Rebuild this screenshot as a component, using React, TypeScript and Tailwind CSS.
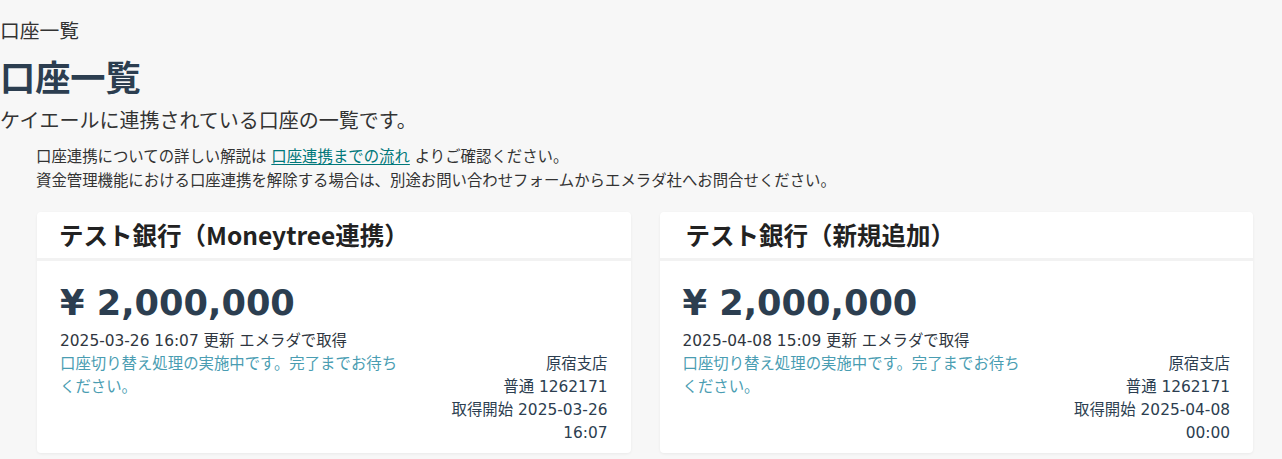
import React from "react";

type Account = {
  title: string;
  titlePad: string;
  updated: string;
  start: string;
  startTime: string;
};

const accounts: Account[] = [
  {
    title: "テスト銀行（Moneytree連携）",
    titlePad: "pl-[22px]",
    updated: "2025-03-26 16:07",
    start: "2025-03-26",
    startTime: "16:07",
  },
  {
    title: "テスト銀行（新規追加）",
    titlePad: "pl-[26px]",
    updated: "2025-04-08 15:09",
    start: "2025-04-08",
    startTime: "00:00",
  },
];

function Card({ a }: { a: Account }) {
  return (
    <div className="flex flex-col rounded-[4px] bg-white shadow-[0_1px_3px_rgba(0,0,0,0.06)]">
      <div
        className={`flex h-[49px] items-center ${a.titlePad} border-b-[3px] border-[#f2f2f2] text-[24.5px] font-bold text-[#222] [font-family:'Noto_Sans_CJK_JP',sans-serif]`}
      >
        {a.title}
      </div>
      <div className="flex flex-col px-[23px] pt-[20px] pb-[8px]">
        <div className="text-[35.2px] leading-[44px] font-bold text-[#2c3e50]">
          ¥ 2,000,000
        </div>
        <div className="mt-[4.5px] text-[15.4px] leading-[23px] text-[#2f3640]">
          {a.updated} 更新 エメラダで取得
        </div>
        <div className="flex justify-between text-[15.4px] leading-[23px]">
          <div className="w-[345px] text-[#4a9db2]">
            口座切り替え処理の実施中です。完了までお待ちください。
          </div>
          <div className="w-[180px] text-right text-[#2c3e50]">
            <div>原宿支店</div>
            <div>普通 1262171</div>
            <div>
              取得開始 {a.start} {a.startTime}
            </div>
          </div>
        </div>
      </div>
    </div>
  );
}

export default function App() {
  return (
    <div className="min-h-[459px] bg-[#f7f7f7] text-[#333] [font-family:'DejaVu_Sans','Noto_Sans_CJK_JP',sans-serif]">
      <div className="pt-[17px] text-[19.8px] leading-[30px] text-[#333]">口座一覧</div>
      <h1 className="mt-[7px] text-[35.2px] leading-[44px] font-bold text-[#2c3e50] [font-family:'Noto_Sans_CJK_JP',sans-serif]">
        口座一覧
      </h1>
      <div className="mt-[8px] text-[20px] leading-[30px] text-[#333]">
        ケイエールに連携されている口座の一覧です。
      </div>
      <div className="mt-[9px] pl-[36px] text-[15.4px] leading-[24px] text-[#333]">
        <div>
          口座連携についての詳しい解説は{" "}
          <a href="#" className="text-[#00787a] underline underline-offset-2">
            口座連携までの流れ
          </a>{" "}
          よりご確認ください。
        </div>
        <div>
          資金管理機能における口座連携を解除する場合は、別途お問い合わせフォームからエメラダ社へお問合せください。
        </div>
      </div>
      <div className="mt-[19px] grid grid-cols-2 gap-[29px] pl-[37px] pr-[29px]">
        {accounts.map((a) => (
          <Card key={a.title} a={a} />
        ))}
      </div>
    </div>
  );
}
